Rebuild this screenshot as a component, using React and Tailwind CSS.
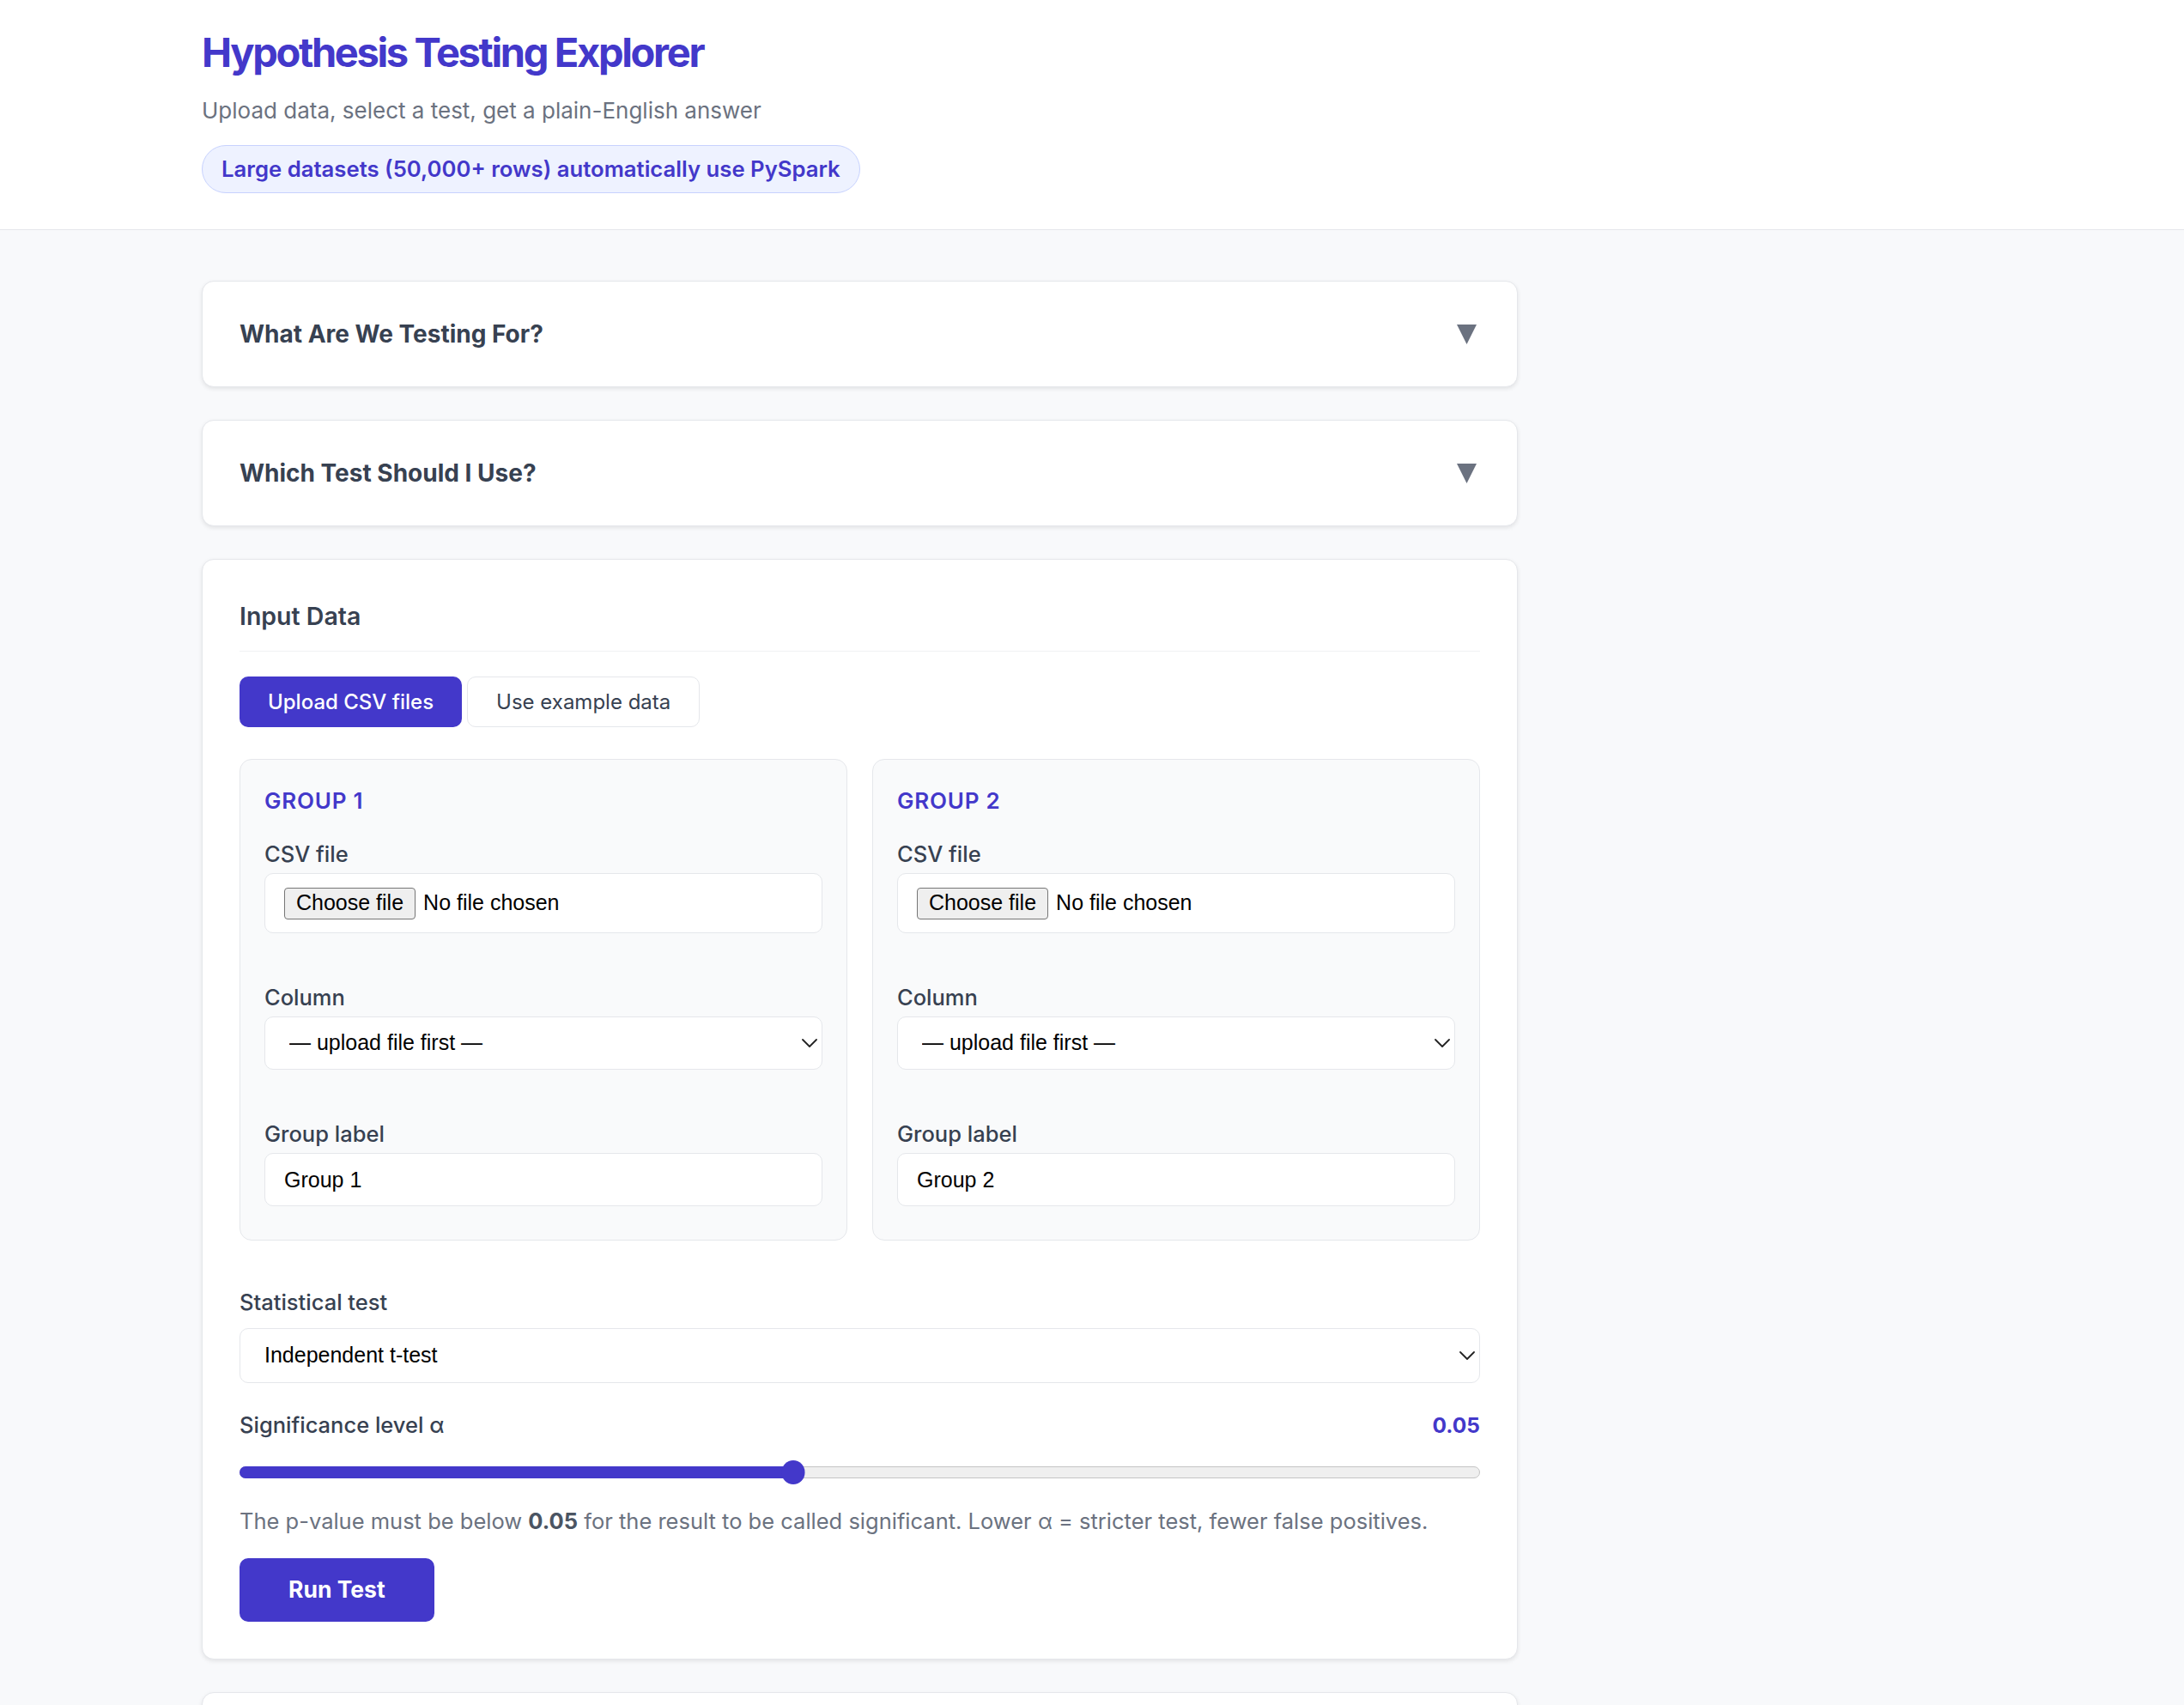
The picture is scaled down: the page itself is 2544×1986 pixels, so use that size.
import React from 'react'

function Chevron({ className }) {
  return (
    <svg className={className} width="18" height="10" viewBox="0 0 18 10" fill="none">
      <polyline points="1,1 9,9 17,1" stroke="#222" strokeWidth="1.8" strokeLinecap="round" strokeLinejoin="round" />
    </svg>
  )
}

function Accordion({ title }) {
  return (
    <div className="flex h-[124px] items-center justify-between rounded-[14px] border border-[#e5e7eb] bg-white px-[43px] shadow-[0_2px_5px_rgba(0,0,0,0.09)]">
      <h3 className="text-[28px] leading-[36px] font-bold text-[#374151]">{title}</h3>
      <svg className="mr-[4px]" width="23" height="23" viewBox="0 0 23 23">
        <polygon points="0,0 23,0 11.5,23" fill="#6b7280" />
      </svg>
    </div>
  )
}

function GroupBox({ n }) {
  return (
    <div className="rounded-[14px] border border-[#e5e7eb] bg-[#f9fafb] px-[28px] pt-[31px] pb-[39px]">
      <div className="text-[26px] leading-[34px] font-semibold tracking-[0.03em] text-[#4338ca]">GROUP {n}</div>

      <label className="mt-[27px] block text-[25.5px] leading-[36px] font-medium text-[#374151]">CSV file</label>
      <div className="mt-[4px] flex h-[70px] items-center rounded-[10px] border border-[#e5e7eb] bg-white pl-[22px] font-['Liberation_Sans',Arial,sans-serif] text-[25px] text-black">
        <span className="flex h-[37px] items-center rounded-[4px] border border-[#767676] bg-[#efefef] px-[13px]">Choose file</span>
        <span className="ml-[9px]">No file chosen</span>
      </div>

      <label className="mt-[57px] block text-[25.5px] leading-[36px] font-medium text-[#374151]">Column</label>
      <div className="relative mt-[4px]">
        <select className="h-[62px] w-full appearance-none rounded-[10px] border border-[#e5e7eb] bg-white pl-[28px] font-['Liberation_Sans',Arial,sans-serif] text-[25px] text-black outline-none">
          <option>— upload file first —</option>
        </select>
        <Chevron className="pointer-events-none absolute right-[6px] top-[26px]" />
      </div>

      <label className="mt-[57px] block text-[25.5px] leading-[36px] font-medium text-[#374151]">Group label</label>
      <input
        type="text"
        defaultValue={`Group ${n}`}
        className="mt-[4px] block h-[62px] w-full rounded-[10px] border border-[#e5e7eb] bg-white pl-[22px] font-['Liberation_Sans',Arial,sans-serif] text-[25px] text-black outline-none"
      />
    </div>
  )
}

export default function App() {
  return (
    <div className="min-h-screen bg-[#f8f9fb] font-['Inter',sans-serif]">
      {/* Header */}
      <header className="border-b border-[#e5e7eb] bg-white pl-[235px] pt-[33px] pb-[42px]">
        <h1 className="text-[47px] leading-[56px] font-bold tracking-[-0.05em] text-[#4338ca]">Hypothesis Testing Explorer</h1>
        <p className="mt-[20px] text-[26px] leading-[39px] text-[#6b7280]">Upload data, select a test, get a plain-English answer</p>
        <div className="mt-[21px] inline-flex h-[56px] items-center rounded-full border border-[#c7d2fe] bg-[#eef2ff] px-[22px] text-[25.7px] font-semibold text-[#4338ca]">
          Large datasets (50,000+ rows) automatically use PySpark
        </div>
      </header>

      {/* Main */}
      <main className="flex w-[1768px] flex-col gap-[38px] pl-[235px] pt-[59px] pb-[60px]">
        <Accordion title="What Are We Testing For?" />
        <Accordion title="Which Test Should I Use?" />

        <section className="rounded-[14px] border border-[#e5e7eb] bg-white p-[43px] shadow-[0_2px_5px_rgba(0,0,0,0.09)]">
          <div className="border-b border-[#f0f1f3] pb-[17px]">
            <h2 className="text-[28.5px] leading-[46px] font-semibold text-[#374151]">Input Data</h2>
          </div>

          <div className="mt-[29px] flex gap-[6px]">
            <button className="h-[59px] rounded-[10px] bg-[#4338ca] px-[33px] text-[24px] font-medium text-white">Upload CSV files</button>
            <button className="h-[59px] rounded-[10px] border border-[#e5e7eb] bg-white px-[33px] text-[24px] text-[#374151]">Use example data</button>
          </div>

          <div className="mt-[37px] grid grid-cols-2 gap-[29px]">
            <GroupBox n={1} />
            <GroupBox n={2} />
          </div>

          <label className="mt-[54px] block text-[25.5px] leading-[36px] font-medium text-[#374151]">Statistical test</label>
          <div className="relative mt-[12px]">
            <select className="h-[64px] w-full appearance-none rounded-[10px] border border-[#e5e7eb] bg-white pl-[28px] font-['Liberation_Sans',Arial,sans-serif] text-[25px] text-black outline-none">
              <option>Independent t-test</option>
            </select>
            <Chevron className="pointer-events-none absolute right-[6px] top-[27px]" />
          </div>

          <div className="mt-[31px] flex items-center justify-between">
            <span className="text-[25.5px] leading-[36px] font-medium text-[#374151]">Significance level α</span>
            <span className="text-[24.5px] leading-[36px] font-bold text-[#4338ca]">0.05</span>
          </div>

          {/* Slider */}
          <div className="mt-[23px] flex h-[28px] items-center">
            <div className="relative h-[14px] w-full rounded-full border border-[#c4c4c4] bg-[#efefef]">
              <div className="absolute -left-px -top-px h-[14px] w-[45%] rounded-l-full bg-[#4338ca]" />
              <div className="absolute left-[44.6%] top-1/2 h-[28px] w-[27px] -translate-x-1/2 -translate-y-1/2 rounded-full bg-[#4338ca]" />
            </div>
          </div>

          <p className="mt-[25px] text-[25.5px] leading-[36px] text-[#6b7280]">
            The p-value must be below <span className="font-bold text-[#4b5563]">0.05</span> for the result to be called significant. Lower α = stricter test, fewer false positives.
          </p>

          <button className="mt-[25px] h-[74px] rounded-[10px] bg-[#4338ca] px-[57px] text-[26.5px] font-bold text-white">Run Test</button>
        </section>

        <section className="h-[300px] rounded-[14px] border border-[#e5e7eb] bg-white shadow-[0_2px_5px_rgba(0,0,0,0.09)]" />
      </main>
    </div>
  )
}
